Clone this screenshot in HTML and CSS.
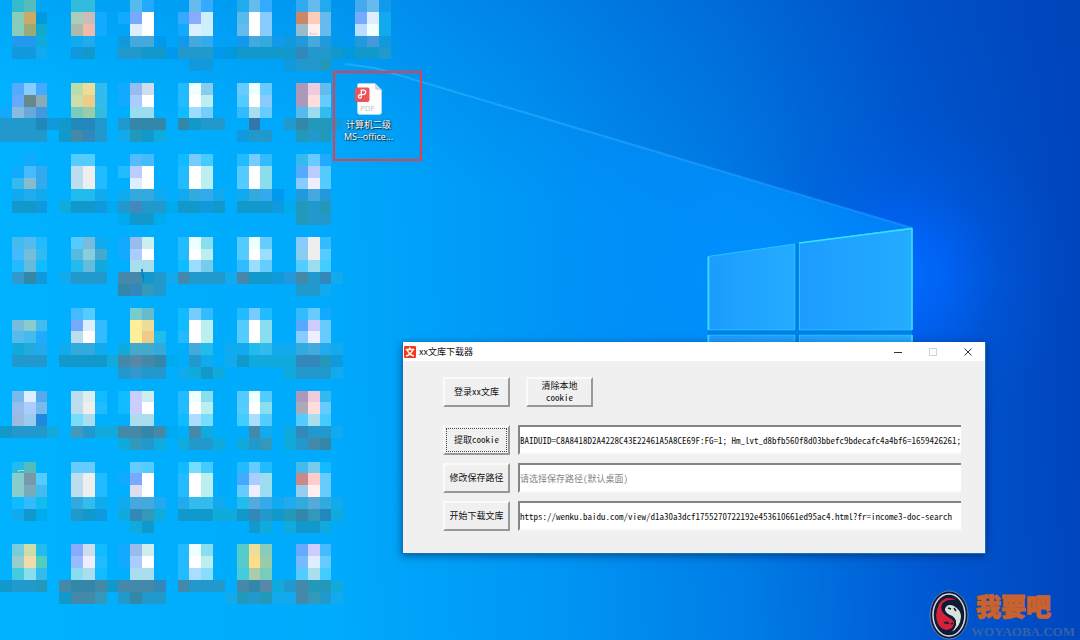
FILE: index.html
```html
<!DOCTYPE html>
<html lang="zh-CN">
<head>
<meta charset="utf-8">
<title>xx文库下载器</title>
<link rel="stylesheet" href="styles.css">
</head>
<body>
<main class="desktop">
  <svg class="wallpaper" viewBox="0 0 1080 640" preserveAspectRatio="xMinYMin slice" aria-hidden="true">
    <defs>
      <linearGradient id="sky" gradientUnits="userSpaceOnUse" x1="0" y1="340" x2="1080" y2="290">
        <stop offset="0" stop-color="#00b2ff"/><stop offset=".3" stop-color="#00aafc"/>
        <stop offset=".5" stop-color="#0096f4"/><stop offset=".68" stop-color="#007ce6"/>
        <stop offset=".85" stop-color="#0058d2"/><stop offset="1" stop-color="#0044bc"/>
      </linearGradient>
      <linearGradient id="shade" gradientUnits="userSpaceOnUse" x1="640" y1="228" x2="700" y2="-40">
        <stop offset="0" stop-color="#0050c8" stop-opacity="0"/><stop offset="1" stop-color="#0046b8" stop-opacity=".36"/>
      </linearGradient>
      <radialGradient id="glow" gradientUnits="userSpaceOnUse" cx="905" cy="275" r="170">
        <stop offset="0" stop-color="#006cff"/><stop offset=".25" stop-color="#0066ff" stop-opacity=".75"/><stop offset=".55" stop-color="#0060f4" stop-opacity=".3"/><stop offset="1" stop-color="#0058e0" stop-opacity="0"/>
      </radialGradient>
      <radialGradient id="beam" gradientUnits="userSpaceOnUse" cx="760" cy="270" r="300">
        <stop offset="0" stop-color="#0090ff"/><stop offset=".5" stop-color="#0092ff" stop-opacity=".6"/><stop offset="1" stop-color="#0098ff" stop-opacity="0"/>
      </radialGradient>
      <linearGradient id="ray" gradientUnits="userSpaceOnUse" x1="345" y1="64" x2="912" y2="228">
        <stop offset="0" stop-color="#30b8ff" stop-opacity=".6"/><stop offset="1" stop-color="#1c98ff" stop-opacity=".6"/>
      </linearGradient>
      <linearGradient id="pane" x1="0" y1="0" x2="1" y2="0">
        <stop offset="0" stop-color="#1c9cff"/><stop offset="1" stop-color="#24acff"/>
      </linearGradient>
    </defs>
    <rect width="1080" height="640" fill="url(#sky)"/>
    <rect width="1080" height="640" fill="url(#shade)"/>
    <circle cx="905" cy="275" r="170" fill="url(#glow)"/>
    <path d="M330 56L912 228V460H460Z" fill="url(#beam)"/>
    <path d="M345 64L375 68L912 228" fill="none" stroke="url(#ray)" stroke-width="2"/>
    <g fill="url(#pane)" stroke="#28c4ff">
      <path d="M708 256.500L795 244V330H708Z"/>
      <path d="M799.500 243L912 228V330H799.500Z"/>
      <path d="M708 335H795V400H708ZM799.500 335H912V400H799.500Z"/>
    </g>
    <path d="M795.500 243.500H799V400H795.500ZM708 330.500H912V334.500H708Z" fill="#0080e8"/>
    <path d="M708.500 330V256.500M799 243L912 228.500V330M708.500 335V400M912 335V400" fill="none" stroke="#38e0ff" stroke-width="1.500"/>
    <g id="mosaic" transform="scale(11.835)" shape-rendering="crispEdges"></g>
    <path d="M141 269h2v5h1v8h-1v-4h-1z" fill="#0086c4"/>
    <path d="M18 470h6v1h-5v1h-1z" fill="#d6d477"/>
    <path d="M310 32v2h7" fill="none" stroke="#ccc"/>
  </svg>

  <a class="shortcut" href="#pdf">
    <svg class="shortcut-icon" viewBox="0 0 28 32" aria-hidden="true">
      <path d="M3.500.5H20L26.500 7V29Q26.500 31.500 24 31.500H5Q2.500 31.500 2.500 29V2Q2.500.5 3.500.5Z" fill="#fdfdfd" stroke="#d5e2ea" stroke-width=".5"/>
      <path d="M20 .5V5Q20 7 22 7H26.500Z" fill="#d3d7da"/>
      <rect y="4.500" width="14.500" height="14.500" rx="2" fill="#ec5457"/>
      <path d="M6.300 13V7.200H8.700Q11 7.500 10.700 9.700Q10.300 11.700 7.900 11.700H5Q3.300 12 3.400 13.700Q3.700 15.300 5.200 15.200Q6.500 15 6.400 13.200" fill="none" stroke="#fff" stroke-width="1.300"/>
      <text x="5" y="27.500" class="shortcut-type">PDF</text>
    </svg>
    <span class="shortcut-name">计算机二级<br>MS--office...</span>
  </a>

  <section class="window" id="app" aria-label="xx文库下载器">
    <header class="titlebar">
      <svg class="app-icon" viewBox="0 0 12 12" aria-hidden="true">
        <rect width="12" height="12" rx="1" fill="#f5391b"/>
        <path d="M5.200 1.500L6.500 3M1.800 3.500H10.200M3.200 4Q5 8.500 9.800 10M8.700 4Q7 8.500 2 10" fill="none" stroke="#fff" stroke-width="1.500"/>
      </svg>
      <h1 class="title">xx文库下载器</h1>
      <div class="controls">
        <button class="control" aria-label="最小化"><svg viewBox="0 0 8 8"><path d="M0 4.500H8" stroke="#333"/></svg></button>
        <button class="control" aria-label="最大化" disabled><svg viewBox="0 0 8 8"><path d="M.5.5H7.500V7.500H.5Z" fill="none" stroke="#d2d2d2"/></svg></button>
        <button class="control" aria-label="关闭"><svg viewBox="0 0 8 8"><path d="M.5.5L7.500 7.500M7.500.5L.5 7.500" stroke="#333"/></svg></button>
      </div>
    </header>
    <form class="panel">
      <div class="actions">
        <button class="btn" type="button">登录xx文库</button>
        <button class="btn" type="button"><span class="line">清除本地</span><span class="line">cookie</span></button>
      </div>
      <div class="fields">
        <button class="btn focused" type="button" id="get-cookie">提取cookie</button>
        <input class="field" type="text" aria-labelledby="get-cookie" value="BAIDUID=C8A8418D2A4228C43E22461A5A8CE69F:FG=1; Hm_lvt_d8bfb560f8d03bbefc9bdecafc4a4bf6=1659426261;">
        <button class="btn" type="button" id="set-path">修改保存路径</button>
        <input class="field" type="text" aria-labelledby="set-path" placeholder="请选择保存路径(默认桌面)">
        <button class="btn" type="button" id="start">开始下载文库</button>
        <input class="field" type="text" aria-labelledby="start" value="https://wenku.baidu.com/view/d1a30a3dcf1755270722192e453610661ed95ac4.html?fr=income3-doc-search">
      </div>
    </form>
  </section>

  <div class="brand">
    <svg class="brand-logo" viewBox="0 0 40 50" aria-hidden="true">
      <ellipse cx="20" cy="25" rx="19" ry="24" fill="#101b36" stroke="#6f91bd" stroke-width=".8"/>
      <ellipse cx="20" cy="25" rx="16" ry="21" fill="none" stroke="#d5dfe4" stroke-width="1.500"/>
      <path d="M29 11Q17 4 10 14Q5 25 9 34Q16 44 24 37Q28 31 19 27Q10 22 13 14Q18 8 29 11Z" fill="#d5213a"/>
      <path d="M16 19Q18 13 25 16Q32 20 32 27Q31 38 22 42Q31 33 24 27Q15 24 16 19Z" fill="#d8e2dc"/>
      <path d="M29 11Q15 9 14 18Q15 24 23 27Q30 33 21 42" fill="none" stroke="#101b36" stroke-width="2"/>
      <path d="M19 18l3 1M25 18l2 3M15 33l3-1 2 2M22 34l2-1" stroke="#17213b" stroke-width="1.500"/>
    </svg>
    <div class="brand-text"><span class="brand-name">我要吧</span><span class="brand-site">WOYAOBA.COM</span></div>
  </div>
</main>
<script src="mosaic.js"></script>
</body>
</html>
```
FILE: styles.css
```css
* { box-sizing: border-box; }
body { margin: 0; font-family: "Noto Sans CJK SC", sans-serif; }
.desktop { position: relative; min-height: 100vh; overflow: hidden; background: #0080e0; }
.wallpaper { position: absolute; inset: 0; width: 100%; height: 100%; }

.shortcut {
  position: absolute; left: 333px; top: 71px; width: 89px; height: 90px;
  display: flex; flex-direction: column; align-items: center; gap: 4px;
  padding: 10px 18px 0 0; border: 2px solid #e93e48;
  color: #fff; text-decoration: none;
}
.shortcut-icon { width: 28px; height: 32px; flex: none; }
.shortcut-type { font: 8px "Open Sans", sans-serif; fill: #c4c4c4; }
.shortcut-name { font-family: "Open Sans", "Noto Sans CJK SC", sans-serif; font-size: 9px; line-height: 12px; text-align: center; white-space: nowrap; text-shadow: 1px 1px 1px #123, 0 0 2px #234; }

.window {
  position: absolute; left: 402px; top: 342px; width: 584px;
  background: #f0f0f0; border: 1px solid #176fb4; border-top: 0;
  box-shadow: 0 2px 8px rgba(0, 20, 60, .5);
}
.titlebar { display: flex; align-items: center; gap: 3px; height: 19px; padding-left: 1px; background: #fff; }
.app-icon { width: 12px; height: 12px; }
.title { flex: 1; margin: 0; font-size: 9px; font-weight: 400; line-height: 12px; color: #111; }
.controls { display: flex; }
.control { display: grid; place-items: center; width: 35px; height: 19px; padding: 0; border: 0; background: none; }
.control svg { width: 8px; height: 8px; }

.panel { display: flex; flex-direction: column; gap: 18px; padding: 16px 24px 22px 40px; }
.actions { display: flex; gap: 16px; }
.fields { display: grid; grid-template-columns: 67px 1fr; gap: 8px; }
.btn, .field {
  height: 30px; padding: 0; border-radius: 0; color: #111;
  font-family: "Noto Sans CJK SC", sans-serif; font-size: 9px; font-feature-settings: "hwid";
}
.btn {
  width: 67px; line-height: 12px; background: #f0f0f0;
  border: 2px solid; border-color: #fafafa #989898 #989898 #fafafa;
}
.line { display: block; }
.focused { outline: 1px dotted #444; outline-offset: -4px; }
.field { width: 100%; min-width: 0; background: #fff; border: 2px solid; border-color: #858585 #f7f7f7 #f7f7f7 #858585; border-right: 0; }
.field::placeholder { color: #858585; opacity: 1; }

.brand { position: absolute; right: 5px; bottom: 0; display: flex; align-items: flex-end; gap: 2px; }
.brand-logo { width: 40px; height: 50px; }
.brand-text { display: flex; flex-direction: column; }
.brand-name { padding-left: 5px; font-size: 25px; line-height: 36px; font-weight: 900; color: #c9622c; -webkit-text-stroke: 1px #c9622c; }
.brand-site { font: bold 13px/17px "Liberation Serif", serif; color: #3563a6; }
```
FILE: mosaic.js
```js
// Each line: grid row | starting column : one colour per cell
const rows = `
0|1:3bc 5bb|6:3bd 3bd|11:5be 2af|16:6be 3af|20:2ae 6be 3af|25:3ae 6be 2ae|30:4ae 6be 19e
1|1:8cb ca6 09d|6:acb cbb 1af|10:1af 7af fff|15:3af 8af cef|20:5be fff 8cf|25:c86 fcb 6be|30:7af def 1ae
2|1:8cb 9a7 1ac|6:aba eba 1af|11:def fff|15:1af def cef|20:6be fff 8cf|25:9bc fee 6be|30:bdf eff 1ae
3|1:29e 29e 1ad|6:1ae 2ae|10:19d 4ad 4ad 09e|15:19e 4ad 3ae|20:19e 4ad 3ad 19e 19d 29d 4ad 29d 09e|30:29d 49d 19d
4|1:19d 19d 1ae|6:19d 19c|10:29c 29c 19c 19c 09e 29c 29c 29c 09e 09d 19c 19c 19c 19c 19c 38b 29c 29c 19c 09d 19c 19c 29c
5|16:19d 19d|24:19d 29c 29c 29b
7|1:5af 8cf 4af|6:bda ed9 3be|10:1af 9be cde|15:2bf eff 8ce|20:6cf eff 6cf|25:a9b ecd 6be
8|1:6af 688 8ab|6:cda ec8 3be|10:1af acf fff|15:2bf fff bee|20:5cf fff 8cf|25:a9b fdd 6cf
9|0:1af 8bd 6ad 49d|6:7cb 9ca 3bd|11:9de 9de|15:1bf 9df 7cf|20:3bf ade 6cf|25:5be 9de 3be
10|0:29c 29c 29c 28b 19d 19c 28b 28b 29c|10:29c 38a 38a 38a|15:38a 19c 29c 29c|21:37a|24:29c 38a 29b 29b 19d
11|0:29c 29c 29c 29c|5:19c 48a 38b 29c|10:1ae 29b 19c 1ad|20:19d 29c 29c|25:29b 29c 29b
13|2:1af|6:5cf 5cf|11:5bf 4bf|15:1bf 7cf 4cf|20:2bf 7cf 3bf|25:3be 6cf 2af
14|1:1af 4bf 3ae|6:bde eee 2bf|10:2bf bcf fff|15:2bf fff bee|20:5cf fff 8de|25:5af bcf 5cf
15|1:3be 8bc 3ae|6:bde eee 2bf|11:def fff|15:2bf fff bee|20:5cf fff 8de|25:8cf eef 5cf
16|1:1ae 2ae 1ae|6:2be 2be 1ae|10:1ae 3ad 3ad 1ae|15:1ae 3ad 3ae 1ae|20:1ae 3ad 3ae 09e|25:29d 4ad 29d
17|1:19c 19c 19d|5:1ad 19c 19c 19d 0ae 29c 48b 29c 29c 0ae 19c 19c 19d 19c|20:19c 19c 19c 19d 0ae 29b 29c 29b
18|10:0ae 19c 19c 0ae|25:29b 29c 29c
20|1:4be 5be 2bf|6:5cf 7bd 1ae|10:1af 9be cee|15:2bf eff 8de|20:5cf eff 6cf|25:8cf eee 3bf
21|1:4bf 7bd 3be|6:5bd 8cd 4ac|10:1af acf fff|15:2bf fff bee|20:5cf fff 9df|25:8ce eee 5cf
22|1:2bf 6bd 1bf|6:2be 6bd 1ad|11:ade ade|15:1bf 9df 7ce|20:3bf 9df 6cf|25:5cf 9de 4cf
23|1:39c 38a 19d|5:1ae 29c 29c 29c|10:48a 48a 19c 29c 1ae 48a 29c 29c 29c 1ae 48a 19c 19c 19d 29d 48a 29c 38b 1ae
24|10:38a 38b 39b 29c|25:29c 29c 1ae
26|6:4bf 5cf|11:7cc 6bc|15:1bf 7cf 3bf|20:2bf 7cf 2bf|25:3bf 6cf 1af
27|1:7bd 8cc 4be|6:7af def 3bf|11:fe9 ed9|15:1bf fff bee|20:5cf fff 8de|25:5af ccf 6cf
28|1:5be 4be 2af|6:bde fff 3bf|11:fe9 ec8 2be|15:2bf fff bee|20:5cf fff 8de|25:8cf eef 6cf
29|1:1ad 2ad 2ae|5:1ae 3ad 3ad 1ae|10:1ad 4ac 4ac 3ad|16:4ad 2be|19:1ae 1ae 2be 3be 1ae 1ae 3ad 4ad 2ae 1ae
30|1:29c 29c 29c|5:19c 19c 19c 19c 1ad 48a 58a 48a 38a 0ae|16:29c 1ae|19:1ae 19c 1ad 1ad 1ad 1ad 38b 38b 29b 19d
31|10:29c 39c 29c 29c|15:1ae 1ad 19c 1ad|24:1ad 29c 29c 29c 1ae
33|1:7be def 5ae|6:bde dee 1bf|10:1bf ccf cee|15:2bf eff 8de|20:5cf eff 5cf|25:a9b ecd 3be
34|1:9be acf 7be|6:bde eee 2bf|10:1bf ccf fff|15:2bf fff bee|20:5cf fff 8de|25:aab fdd 6cf
35|1:9bd 9ce 28d|6:7df ade|11:ade ade|15:1bf adf 7df|20:4cf adf 5cf|25:5cf ade 4cf
36|0:19c 29c 29c 29c 1ad|6:49b 29c 1ad 1ad 48a 48a 38a 48a 0ae|16:48a 1ad|21:48a 1ae|24:1ad 38b 29c 29c 1ae
37|10:1ad 39b 29c 1ad|15:1ad 29c 29c 1ad|20:1ad 29c 39b|24:1ad 29c 48a 38a
39|1:2be 5bb|6:6cf 6cf|11:6cf 5cf|15:1bf 7df 4cf|20:2bf 6cf 2bf|25:4be 7ce 1bf
40|1:8cc 79a 5cf|6:bde eee 2bf|10:1af 7af fff|15:2bf fff bee|20:4af acf 9de|25:c88 fcc 6cf
41|1:8cc 7ab 4be|6:bde eee 2bf|11:dde fff|15:2bf fff bee|20:6cf eef 9de|25:9ce fee 6cf
42|1:1bf 3bf 1be|6:3ad 3be 1ae|10:1ae 4ad 4ad 2ae|15:2ae 3be 3be 1ae|20:2be 5ad 3ae 1ae 2ae 3ad 5ad 3ad 1ae
43|1:1ae 19c 0ae|6:29c 19c 19d|10:1ad 38b 39b 1ad|15:19c 19c 19c 1ad 1ad 19c 38b 29c 19c 29b 38a 39b 28b 1ad
44|11:1ad 19c|21:19c 1ad|24:1ad 19c 19c 1ad
46|1:7cd cda 2be|6:8af cde 1bf|10:1af 9be cee|15:2bf eff 8de|20:5cc ed9 8cb|25:6af ccf 4bf
47|1:9cc eda 5cb|6:9bf eef 2bf|10:1af acf fff|15:2bf fff bee|20:5cc fd8 9ca|25:7bf def 6cf
48|1:4cd 8de 3be|6:8de ade 1bf|11:ade ade|15:2bf adf 8df|20:4cd aca 7cb|25:5cf ade 4cf
49|0:19c 29c 29c 29b|5:48a 38a 38a 48a 19c 48a 48a 48a 38b|15:48a 29c 29c 29c|20:48a 38a 58a 1ad 29c 48a 29b 29b 1ad
50|5:19c 48a 48a 39b|10:29c 38a 29c 29c|19:1ae 29b 29c 29b 1ae 1ae 48a 39b 29c 1ae`;

const mosaic = document.getElementById("mosaic");
for (const line of rows.trim().split("\n")) {
  const [y, ...runs] = line.split("|");
  for (const run of runs) {
    const [start, colours] = run.split(":");
    colours.split(" ").forEach((colour, i) => {
      const cell = document.createElementNS("http://www.w3.org/2000/svg", "rect");
      cell.setAttribute("x", Number(start) + i);
      cell.setAttribute("y", y);
      cell.setAttribute("width", 1);
      cell.setAttribute("height", 1);
      cell.setAttribute("fill", "#" + colour);
      mosaic.append(cell);
    });
  }
}
```
